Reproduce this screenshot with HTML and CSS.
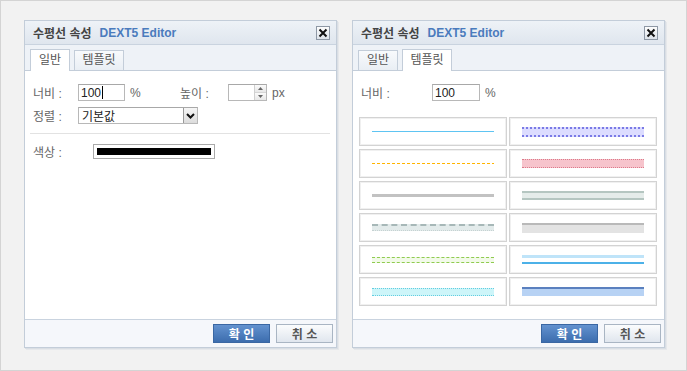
FILE: index.html
```html
<!DOCTYPE html>
<html lang="ko">
<head>
  <meta charset="UTF-8">
  <meta name="viewport" content="width=device-width, initial-scale=1.0">
  <title>수평선 속성</title>
  <link rel="stylesheet" href="styles.css">
</head>
<body>
  <div class="frame">

    <!-- general tab -->
    <div class="dlg">
      <div class="dlg-title">
        <span class="t-name">수평선 속성</span>
        <span class="t-app">DEXT5 Editor</span>
        <span class="close">
          <svg width="10" height="10" viewBox="0 0 10 10"><path d="M1.5 1.5 L8.5 8.5 M8.5 1.5 L1.5 8.5" stroke="#111" stroke-width="2"/></svg>
        </span>
      </div>
      <div class="tabs">
        <div class="tab tab-sm active">일반</div>
        <div class="tab tab-lg">템플릿</div>
      </div>
      <div class="dlg-body">
        <div class="row">
          <span class="lbl">너비 :</span>
          <div class="field w-num">100<span class="caret"></span></div>
          <span class="unit">%</span>
          <span class="lbl lbl-h">높이 :</span>
          <div class="field spin">
            <span class="spin-val"></span>
            <span class="spin-btns">
              <span class="spin-b"><svg width="5" height="3" viewBox="0 0 5 3"><path d="M0 3 L2.5 0 L5 3Z" fill="#666"/></svg></span>
              <span class="spin-b"><svg width="5" height="3" viewBox="0 0 5 3"><path d="M0 0 L2.5 3 L5 0Z" fill="#666"/></svg></span>
            </span>
          </div>
          <span class="unit">px</span>
        </div>
        <div class="row row-2">
          <span class="lbl">정렬 :</span>
          <div class="field select">
            <span class="sel-val">기본값</span>
            <span class="sel-btn">
              <svg width="9" height="6" viewBox="0 0 9 6"><path d="M1 1 L4.5 4.5 L8 1" fill="none" stroke="#111" stroke-width="2"/></svg>
            </span>
          </div>
        </div>
        <div class="sep"></div>
        <div class="row row-color">
          <span class="lbl lbl-wide">색상 :</span>
          <div class="color-box"><div class="color-bar"></div></div>
        </div>
      </div>
      <div class="dlg-foot">
        <button class="btn btn-ok">확 인</button>
        <button class="btn">취 소</button>
      </div>
    </div>

    <!-- template tab -->
    <div class="dlg">
      <div class="dlg-title">
        <span class="t-name">수평선 속성</span>
        <span class="t-app">DEXT5 Editor</span>
        <span class="close">
          <svg width="10" height="10" viewBox="0 0 10 10"><path d="M1.5 1.5 L8.5 8.5 M8.5 1.5 L1.5 8.5" stroke="#111" stroke-width="2"/></svg>
        </span>
      </div>
      <div class="tabs">
        <div class="tab tab-sm">일반</div>
        <div class="tab tab-lg active">템플릿</div>
      </div>
      <div class="dlg-body">
        <div class="row">
          <span class="lbl lbl-tpl">너비 :</span>
          <div class="field w-tpl">100</div>
          <span class="unit">%</span>
        </div>
        <div class="tpl-grid">
          <div class="tpl"><div class="ln ln-1"></div></div>
          <div class="tpl"><div class="ln ln-r1"></div></div>
          <div class="tpl"><div class="ln ln-2"></div></div>
          <div class="tpl"><div class="ln ln-r2"></div></div>
          <div class="tpl"><div class="ln ln-3"></div></div>
          <div class="tpl"><div class="ln ln-r3"></div></div>
          <div class="tpl"><div class="ln ln-4"></div></div>
          <div class="tpl"><div class="ln ln-r4"></div></div>
          <div class="tpl"><div class="ln ln-5"></div></div>
          <div class="tpl"><div class="ln ln-r5"></div></div>
          <div class="tpl"><div class="ln ln-6"></div></div>
          <div class="tpl"><div class="ln ln-r6"></div></div>
        </div>
      </div>
      <div class="dlg-foot">
        <button class="btn btn-ok">확 인</button>
        <button class="btn">취 소</button>
      </div>
    </div>

  </div>
</body>
</html>
```

FILE: styles.css
```css
body {
  margin: 0;
  font-family: "Liberation Sans", "Noto Sans CJK KR", sans-serif;
  font-size: 12px;
  color: #666;
}

.frame {
  width: 687px;
  height: 371px;
  box-sizing: border-box;
  border: 1px solid #d4d4d4;
  background: #f2f2f2;
  display: flex;
  align-items: flex-start;
  gap: 15px;
  padding: 19px 0 0 23px;
}

.dlg {
  width: 313px;
  height: 328px;
  box-sizing: border-box;
  border: 1px solid #c3cdd9;
  background: #fff;
  display: flex;
  flex-direction: column;
  box-shadow: 1px 1px 0 #d9dee4, 2px 2px 0 #e6e8eb;
}

.dlg-title {
  height: 23px;
  flex: none;
  display: flex;
  align-items: center;
  padding: 0 6px 0 8px;
  border-bottom: 1px solid #c9d3df;
  background: linear-gradient(#eef2f7, #dfe6ee);
}

.t-name {
  font-weight: bold;
  color: #444;
}

.t-app {
  margin-left: 8px;
  font-weight: bold;
  color: #4a7bbd;
}

.close {
  margin-left: auto;
  width: 12px;
  height: 12px;
  border: 1px solid #8e98a5;
  background: linear-gradient(#fdfdfd, #dde3ea);
  display: flex;
  align-items: center;
  justify-content: center;
}

.tabs {
  height: 25px;
  flex: none;
  display: flex;
  align-items: flex-end;
  gap: 4px;
  padding-left: 5px;
  border-bottom: 1px solid #c3cdd9;
  background: #eef2f7;
}

.tab {
  height: 20px;
  box-sizing: border-box;
  border: 1px solid #c3cdd9;
  border-bottom: none;
  text-align: center;
  line-height: 19px;
  color: #555;
  background: linear-gradient(#f8fafc, #e9eef4);
}

.tab-sm { width: 40px; }
.tab-lg { width: 50px; }

.tab.active {
  height: 22px;
  margin-bottom: -1px;
  line-height: 20px;
  background: #fff;
}

.dlg-body {
  flex: 1;
  padding: 13px 6px 0 8px;
}

.row {
  display: flex;
  align-items: center;
  height: 17px;
}

.row-2 { margin-top: 6px; }

.lbl {
  width: 45px;
  flex: none;
}

.lbl-h { width: 48px; }
.lbl-wide { width: 60px; }
.lbl-tpl { width: 71px; }

.field {
  height: 17px;
  box-sizing: border-box;
  border: 1px solid #b8b8b8;
  border-top-color: #a8a8a8;
  background: #fff;
  color: #222;
  display: flex;
  align-items: center;
  padding-left: 2px;
}

.w-num { width: 47px; }
.w-tpl { width: 48px; }

.caret {
  width: 1px;
  height: 13px;
  margin-left: 1px;
  background: #000;
}

.unit {
  margin-left: 5px;
  width: 50px;
}

.spin {
  width: 39px;
  padding-left: 0;
  justify-content: space-between;
}

.spin-btns {
  width: 11px;
  height: 15px;
  display: flex;
  flex-direction: column;
  border-left: 1px solid #d0d0d0;
}

.spin-b {
  flex: 1;
  display: flex;
  align-items: center;
  justify-content: center;
  background: linear-gradient(#fafafa, #e8e8e8);
}

.spin-b + .spin-b { border-top: 1px solid #d6d6d6; }

.select {
  width: 120px;
  justify-content: space-between;
  padding-left: 3px;
}

.sel-btn {
  width: 14px;
  height: 15px;
  box-sizing: border-box;
  border-left: 1px solid #9a9a9a;
  background: linear-gradient(#f6f6f6, #dcdcdc);
  display: flex;
  align-items: center;
  justify-content: center;
}

.sep {
  height: 1px;
  margin: 9px 0 0 -3px;
  background: #e2e2e2;
}

.row-color {
  margin-top: 10px;
  height: 15px;
}

.color-box {
  width: 122px;
  height: 15px;
  box-sizing: border-box;
  border: 1px solid #aaa;
  padding: 3px 3px;
  background: #fff;
}

.color-bar {
  height: 7px;
  background: #000;
}

.dlg-foot {
  height: 27px;
  flex: none;
  display: flex;
  align-items: center;
  justify-content: flex-end;
  gap: 6px;
  padding-right: 3px;
  border-top: 1px solid #c9d3df;
  background: #f5f7fb;
}

.btn {
  width: 57px;
  height: 19px;
  padding: 0;
  font-family: inherit;
  font-size: 12px;
  font-weight: bold;
  color: #555;
  border: 1px solid #a9b5c3;
  background: linear-gradient(#fbfcfd, #e0e6ee);
}

.btn-ok {
  color: #fff;
  border-color: #3a67a3;
  background: linear-gradient(#6392cf, #3c6dae);
}

/* template grid */
.tpl-grid {
  margin: 16px 0 0 -2px;
  display: grid;
  grid-template-columns: 148px 148px;
  grid-auto-rows: 29px;
  column-gap: 2px;
  row-gap: 3px;
}

.tpl {
  box-sizing: border-box;
  border: 1px solid #d3d3d3;
  box-shadow: inset 0 0 0 1px #f0f0f0;
  display: flex;
  align-items: center;
  padding-left: 12px;
}

.ln {
  width: 122px;
  box-sizing: border-box;
}

.ln-1 {
  height: 1px;
  background: #5ec4f2;
}

.ln-2 {
  height: 1px;
  background: repeating-linear-gradient(90deg, #ffb400 0 3px, transparent 3px 5px);
}

.ln-3 {
  height: 3px;
  background: #c2c2c2;
}

.ln-4 {
  height: 7px;
  border-top: 2px dashed #a7b8b8;
  border-bottom: 1px dotted #c5d2d2;
  background: #e3ebeb;
}

.ln-5 {
  height: 6px;
  border-top: 1px dashed #8fcb4f;
  border-bottom: 1px dashed #8fcb4f;
  background: #f2fae9;
}

.ln-6 {
  height: 8px;
  border-top: 1px dotted #63cde0;
  border-bottom: 1px dotted #63cde0;
  background: #cdf5f9;
}

.ln-r1 {
  height: 10px;
  border-top: 2px dotted #7a7ae6;
  border-bottom: 2px dotted #7a7ae6;
  background: #dcdcff;
}

.ln-r2 {
  height: 9px;
  border-top: 1px dotted #dc7a8a;
  border-bottom: 1px dotted #dc7a8a;
  background: #f6c4cc;
}

.ln-r3 {
  height: 9px;
  border-top: 2px solid #b5c6c1;
  border-bottom: 2px solid #b5c6c1;
  background: #e5ecea;
}

.ln-r4 {
  height: 10px;
  border-top: 2px solid #b9b9b9;
  background: #e3e3e3;
}

.ln-r5 {
  height: 9px;
  border-top: 3px solid #bfe4f9;
  border-bottom: 2px solid #4cb1e8;
  background: #fff;
}

.ln-r6 {
  height: 9px;
  border-top: 2px solid #5a80bf;
  background: #b7d2f4;
}
```
